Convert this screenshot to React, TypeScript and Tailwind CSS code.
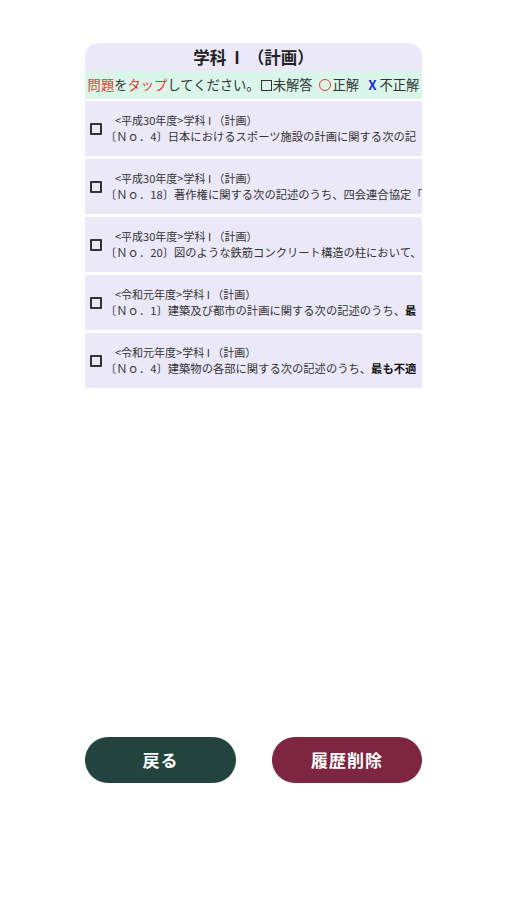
import React from "react";

type Row = { year: string; pre: string; bold?: string };

const rows: Row[] = [
  { year: "<平成30年度>学科 I （計画）", pre: "〔Ｎｏ．4〕日本におけるスポーツ施設の計画に関する次の記" },
  { year: "<平成30年度>学科 I （計画）", pre: "〔Ｎｏ．18〕著作権に関する次の記述のうち、四会連合協定「" },
  { year: "<平成30年度>学科 I （計画）", pre: "〔Ｎｏ．20〕図のような鉄筋コンクリート構造の柱において、" },
  { year: "<令和元年度>学科 I （計画）", pre: "〔Ｎｏ．1〕建築及び都市の計画に関する次の記述のうち、", bold: "最" },
  { year: "<令和元年度>学科 I （計画）", pre: "〔Ｎｏ．4〕建築物の各部に関する次の記述のうち、", bold: "最も不適" },
];

export default function App() {
  return (
    <div
      className="w-[507px] h-[900px] bg-white flex flex-col items-center pt-[43px]"
      style={{ fontFamily: '"Noto Sans CJK JP", "Noto Sans", sans-serif' }}
    >
      <div className="w-[337px] flex flex-col">
        <div className="h-[28px] bg-[#ebe9f8] rounded-t-[14px] flex items-center justify-center text-[16.5px] font-bold text-[#222] leading-none">
          <span>学科</span>
          <span className="mx-[8px]">I</span>
          <span>（計画）</span>
        </div>
        <div className="h-[28px] bg-[#d9f6e9] flex items-center justify-center text-[13.3px] text-[#333] whitespace-nowrap leading-none">
          <span className="text-[#e53935]">問題</span>
          <span>を</span>
          <span className="text-[#e53935]">タップ</span>
          <span>してください。</span>
          <span className="inline-block w-[11px] h-[11px] border-[1.5px] border-[#333] mr-[1px] ml-[1px]"></span>
          <span>未解答</span>
          <span className="inline-block w-[12px] h-[12px] rounded-full border-[1.5px] border-[#e53935] ml-[6px] mr-[2px]"></span>
          <span>正解</span>
          <span className="text-[#1e2fd6] font-bold ml-[9px] mr-[3px]">X</span>
          <span>不正解</span>
        </div>
        <div className="flex flex-col gap-[3px] mt-[2px]">
          {rows.map((r, i) => (
            <div key={i} className="h-[55px] bg-[#ebe9f8] flex items-center pl-[5px] overflow-hidden">
              <div className="w-[12px] h-[12px] border-2 border-[#333] rounded-[1px] shrink-0"></div>
              <div className="ml-[3px] flex flex-col min-w-0 overflow-hidden text-[#333] whitespace-nowrap">
                <div className="pl-[10px] mb-[1px] text-[11px] leading-[15px]">{r.year}</div>
                <div className="text-[11.3px] leading-[15px]">
                  {r.pre}
                  {r.bold && <span className="font-bold text-[#111]">{r.bold}</span>}
                </div>
              </div>
            </div>
          ))}
        </div>
      </div>
      <div className="w-[337px] flex justify-between mt-[349px]">
        <button className="w-[151px] h-[46px] rounded-full bg-[#23433f] text-white text-[17px] font-bold tracking-[1px] flex items-center justify-center">
          戻る
        </button>
        <button className="w-[150px] h-[46px] rounded-full bg-[#7e2540] text-white text-[17px] font-bold tracking-[1px] flex items-center justify-center">
          履歴削除
        </button>
      </div>
    </div>
  );
}
